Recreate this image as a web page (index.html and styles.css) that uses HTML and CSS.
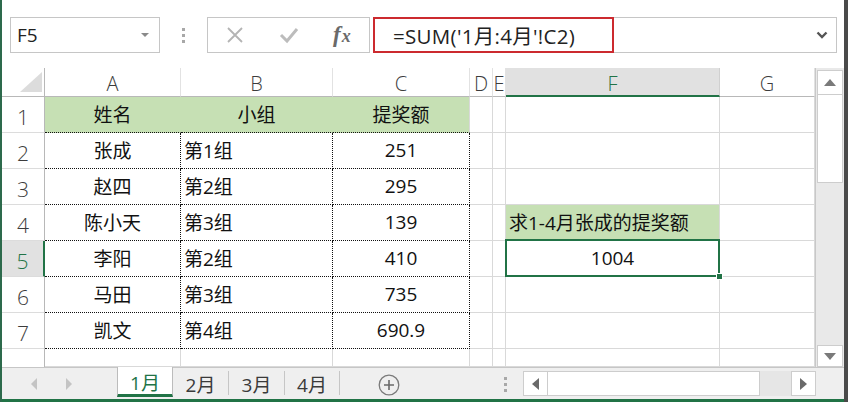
FILE: index.html
```html
<!DOCTYPE html>
<html lang="zh">
<head>
<meta charset="utf-8">
<title>Excel</title>
<link rel="stylesheet" href="styles.css">
</head>
<body>
<div class="app">
  <div class="fbar">
    <div class="namebox">
      <span class="nb-text">F5</span>
      <svg class="nb-dd" width="8" height="5" viewBox="0 0 8 5"><polygon points="0,0 8,0 4,4" fill="#8a8a8a"/></svg>
    </div>
    <div class="vdots"><i></i><i></i><i></i></div>
    <div class="btns">
      <svg class="btn-x" width="18" height="18" viewBox="0 0 18 18"><path d="M2 2 L16 16 M16 2 L2 16" stroke="#b4b4b4" stroke-width="1.8" fill="none"/></svg>
      <svg class="btn-ok" width="20" height="18" viewBox="0 0 20 18"><path d="M2 9 L8 15 L18 3" stroke="#bcbcbc" stroke-width="3" fill="none"/></svg>
      <span class="fx"><span class="fx-f">f</span><span class="fx-x">x</span></span>
    </div>
    <div class="formula">
      <div class="fred">=SUM('1月:4月'!C2)</div>
      <svg class="chev" width="12" height="8" viewBox="0 0 12 8"><path d="M1.5 1.5 L6 6 L10.5 1.5" stroke="#555" stroke-width="2.4" fill="none"/></svg>
    </div>
  </div>

  <div class="main">
    <div class="grid">
      <div class="corner"><svg width="22" height="20" viewBox="0 0 22 20"><polygon points="22,0 22,20 0,20" fill="#dcdcdc"/></svg></div>
      <div class="ch">A</div>
      <div class="ch">B</div>
      <div class="ch">C</div>
      <div class="ch">D</div>
      <div class="ch">E</div>
      <div class="ch sel">F</div>
      <div class="ch">G</div>

      <div class="rh">1</div>
      <div class="c g gn ctr">姓名</div>
      <div class="c g gn ctr">小组</div>
      <div class="c g ctr">提奖额</div>
      <div class="c"></div>
      <div class="c"></div>
      <div class="c"></div>
      <div class="c"></div>

      <div class="rh">2</div>
      <div class="c d ctr">张成</div>
      <div class="c d">第1组</div>
      <div class="c d ctr">251</div>
      <div class="c"></div>
      <div class="c"></div>
      <div class="c"></div>
      <div class="c"></div>

      <div class="rh">3</div>
      <div class="c d ctr">赵四</div>
      <div class="c d">第2组</div>
      <div class="c d ctr">295</div>
      <div class="c"></div>
      <div class="c"></div>
      <div class="c"></div>
      <div class="c"></div>

      <div class="rh">4</div>
      <div class="c d ctr">陈小天</div>
      <div class="c d">第3组</div>
      <div class="c d ctr">139</div>
      <div class="c"></div>
      <div class="c"></div>
      <div class="c g">求1-4月张成的提奖额</div>
      <div class="c"></div>

      <div class="rh sel">5</div>
      <div class="c d ctr">李阳</div>
      <div class="c d">第2组</div>
      <div class="c d ctr">410</div>
      <div class="c"></div>
      <div class="c"></div>
      <div class="c ctr active">1004<span class="handle"></span></div>
      <div class="c"></div>

      <div class="rh">6</div>
      <div class="c d ctr">马田</div>
      <div class="c d">第3组</div>
      <div class="c d ctr">735</div>
      <div class="c"></div>
      <div class="c"></div>
      <div class="c"></div>
      <div class="c"></div>

      <div class="rh">7</div>
      <div class="c d ctr">凯文</div>
      <div class="c d">第4组</div>
      <div class="c d ctr">690.9</div>
      <div class="c"></div>
      <div class="c"></div>
      <div class="c"></div>
      <div class="c"></div>

      <div class="rh last"></div>
      <div class="c"></div>
      <div class="c"></div>
      <div class="c"></div>
      <div class="c"></div>
      <div class="c"></div>
      <div class="c"></div>
      <div class="c"></div>
    </div>
    <div class="vscroll">
      <div class="vbtn up"><svg width="12" height="7" viewBox="0 0 12 7"><polygon points="0,7 12,7 6,0" fill="#7a7a7a"/></svg></div>
      <div class="vthumb"></div>
      <div class="vtrack"></div>
      <div class="vbtn down"><svg width="12" height="7" viewBox="0 0 12 7"><polygon points="0,0 12,0 6,7" fill="#7a7a7a"/></svg></div>
    </div>
  </div>

  <div class="tabbar">
    <div class="tabnav">
      <svg class="nav-l" width="6" height="12" viewBox="0 0 6 12"><polygon points="6,0 6,12 0,6" fill="#c4c4c4"/></svg>
      <svg class="nav-r" width="6" height="12" viewBox="0 0 6 12"><polygon points="0,0 0,12 6,6" fill="#c4c4c4"/></svg>
    </div>
    <div class="tab active">1月</div>
    <div class="tab">2月</div>
    <div class="tab">3月</div>
    <div class="tab t4">4月</div>
    <div class="addsheet"><svg width="22" height="22" viewBox="0 0 22 22"><circle cx="11" cy="11" r="9.8" stroke="#7a7a7a" stroke-width="1.3" fill="none"/><path d="M11 6 V16 M6 11 H16" stroke="#6a6a6a" stroke-width="1.6"/></svg></div>
    <div class="hdots"><i></i><i></i><i></i></div>
    <div class="hscroll">
      <div class="hbtn"><svg width="7" height="12" viewBox="0 0 7 12"><polygon points="7,0 7,12 0,6" fill="#6a6a6a"/></svg></div>
      <div class="hthumb"></div>
      <div class="htrack"></div>
      <div class="hbtn"><svg width="7" height="12" viewBox="0 0 7 12"><polygon points="0,0 0,12 7,6" fill="#6a6a6a"/></svg></div>
    </div>
  </div>
  <div class="statusline"></div>
</div>
</body>
</html>
```

FILE: styles.css
```css
* { box-sizing: border-box; }
html, body { margin: 0; padding: 0; }
body {
  width: 848px;
  height: 402px;
  overflow: hidden;
  background: #fff;
  font-family: "Open Sans", "Noto Sans CJK SC", sans-serif;
}
.app {
  width: 848px;
  height: 402px;
  border-left: 2px solid #2d6a4c;
  border-right: 4px solid #4a4a4a;
  display: flex;
  flex-direction: column;
  background: #fff;
}

/* formula bar */
.fbar {
  height: 68px;
  flex: none;
  display: flex;
  align-items: flex-start;
  padding: 17px 0 0 8px;
}
.namebox {
  width: 150px;
  height: 36px;
  border: 1px solid #c6c6c6;
  display: flex;
  align-items: center;
  justify-content: space-between;
  padding: 0 10px 0 6px;
}
.nb-text {
  font-family: "Open Sans", "Noto Sans", sans-serif;
  font-size: 19px;
  color: #222;
}
.vdots {
  width: 47px;
  height: 36px;
  display: flex;
  flex-direction: column;
  align-items: center;
  justify-content: center;
  gap: 3px;
}
.vdots i, .hdots i {
  display: block;
  width: 3px;
  height: 3px;
  background: #a8a8a8;
}
.btns {
  width: 163px;
  height: 36px;
  border: 1px solid #c6c6c6;
  display: flex;
  align-items: center;
  padding-left: 18px;
}
.btn-x { margin-right: 35px; }
.btn-ok { margin-right: 34px; }
.fx {
  font-family: "Liberation Serif", serif;
  font-style: italic;
  font-weight: bold;
  color: #6a6a6a;
  font-size: 23px;
  line-height: 1;
  margin-top: -2px;
}
.fx-x { font-size: 18px; margin-left: 1px; }
.formula {
  margin-left: 3px;
  width: 464px;
  height: 36px;
  border: 1px solid #c6c6c6;
  border-left: none;
  display: flex;
  align-items: center;
}
.fred {
  width: 241px;
  height: 36px;
  margin-top: -1px;
  margin-bottom: -1px;
  border: 2px solid #cc2a2f;
  display: flex;
  align-items: center;
  padding-left: 18px;
  font-family: "Open Sans", "Noto Sans CJK SC", sans-serif;
  font-size: 20.5px;
  letter-spacing: 0.3px;
  color: #222;
  white-space: nowrap;
}
.chev { margin-left: auto; margin-right: 8px; }

/* grid */
.main {
  height: 299px;
  flex: none;
  display: flex;
}
.grid {
  width: 813px;
  height: 299px;
  overflow: hidden;
  display: grid;
  grid-template-columns: 43px 136px 152px 137px 23px 13px 214px 95px;
  grid-template-rows: 29px repeat(7, 36px) 18px;
}
.corner {
  border-right: 1px solid #b8b8b8;
  border-bottom: 1px solid #b8b8b8;
  display: flex;
  justify-content: flex-end;
  align-items: flex-end;
  padding: 0 2px 4px 0;
}
.ch {
  border-right: 1px solid #e2e2e2;
  border-bottom: 1px solid #b8b8b8;
  display: flex;
  align-items: center;
  justify-content: center;
  padding-top: 3px;
  font-family: "Open Sans", "Noto Sans", sans-serif;
  font-weight: 300;
  font-size: 20px;
  color: #3c3c3c;
  overflow: hidden;
}
.ch.sel {
  background: #e1e1e1;
  color: #217346;
  border-bottom: 2px solid #217346;
  border-right-color: #d0d0d0;
}
.rh {
  border-right: 1px solid #b8b8b8;
  border-bottom: 1px solid #dcdcdc;
  display: flex;
  align-items: center;
  justify-content: center;
  padding-top: 5px;
  font-family: "Open Sans", "Noto Sans", sans-serif;
  font-weight: 300;
  font-size: 21px;
  color: #3c3c3c;
}
.rh.sel {
  background: #e1e1e1;
  color: #217346;
  border-right: 2px solid #217346;
}
.rh.last { border-bottom: none; }
.c {
  border-right: 1px solid #d9d9d9;
  border-bottom: 1px solid #d9d9d9;
  display: flex;
  align-items: center;
  padding: 0 3px 1px 3px;
  font-family: "Open Sans", "Noto Sans CJK SC", sans-serif;
  font-size: 19px;
  font-weight: 400;
  color: #111;
  white-space: nowrap;
}
.c.ctr { justify-content: center; }
.c.g { background: #c6e0b4; }
.c.gn { border-right-color: #c6e0b4; }
.grid > .c.g:nth-child(-n+16) { border-bottom: 1px dotted #111; }
.c.d {
  border-right: 1px dotted #111;
  border-bottom: 1px dotted #111;
}
.c.active { position: relative; }
.c.active::after {
  content: "";
  position: absolute;
  left: -1px;
  top: -2px;
  right: -1px;
  bottom: -1px;
  border: 2px solid #217346;
}
.handle {
  position: absolute;
  right: -4px;
  bottom: -4px;
  width: 7px;
  height: 7px;
  background: #217346;
  border: 1px solid #fff;
  z-index: 2;
}

/* vertical scrollbar */
.vscroll {
  width: 29px;
  height: 299px;
  background: #e9e9e9;
  border-left: 1px solid #c8c8c8;
  display: flex;
  flex-direction: column;
  padding: 2px 1px 0 1px;
}
.vbtn {
  height: 25px;
  background: #fff;
  border: 1px solid #cdcdcd;
  display: flex;
  align-items: center;
  justify-content: center;
  flex: none;
}
.vthumb {
  height: 88px;
  background: #fff;
  border: 1px solid #cdcdcd;
  border-top: none;
  flex: none;
}
.vtrack { flex: 1; }
.vbtn.down { height: 22px; }

/* tab bar */
.tabbar {
  height: 32px;
  flex: none;
  border-top: 1px solid #c6c6c6;
  background: #efefef;
  display: flex;
  align-items: flex-start;
}
.tabnav {
  width: 115px;
  height: 31px;
  display: flex;
  align-items: center;
  padding-left: 29px;
}
.nav-r { margin-left: 29px; }
.tab {
  width: 56px;
  height: 24px;
  margin-top: 3px;
  border-right: 1px solid #c6c6c6;
  display: flex;
  align-items: center;
  justify-content: center;
  font-family: "Open Sans", "Noto Sans CJK SC", sans-serif;
  font-size: 19px;
  color: #3a3a3a;
  padding-top: 1px;
}
.tab.t4 { width: 55px; }
.tab.active {
  margin-top: -1px;
  height: 30px;
  background: #fff;
  border-left: 1px solid #bcbcbc;
  border-right: 1px solid #bcbcbc;
  border-bottom: 3px solid #217346;
  color: #217346;
  padding-top: 2px;
}
.addsheet {
  margin-left: 38px;
  height: 31px;
  display: flex;
  align-items: center;
  padding-top: 2px;
}
.hdots {
  margin-left: 104px;
  height: 31px;
  display: flex;
  flex-direction: column;
  justify-content: center;
  gap: 3px;
  padding-top: 2px;
}
.hscroll {
  margin-left: 16px;
  margin-top: 3px;
  width: 293px;
  height: 25px;
  display: flex;
  background: #e6e6e6;
}
.hbtn {
  width: 25px;
  height: 25px;
  background: #fff;
  border: 1px solid #cdcdcd;
  display: flex;
  align-items: center;
  justify-content: center;
}
.hthumb {
  width: 212px;
  height: 25px;
  background: #fff;
  border: 1px solid #cdcdcd;
  border-left: none;
}
.htrack { flex: 1; }
.statusline {
  height: 3px;
  flex: none;
  background: #217346;
}
```
